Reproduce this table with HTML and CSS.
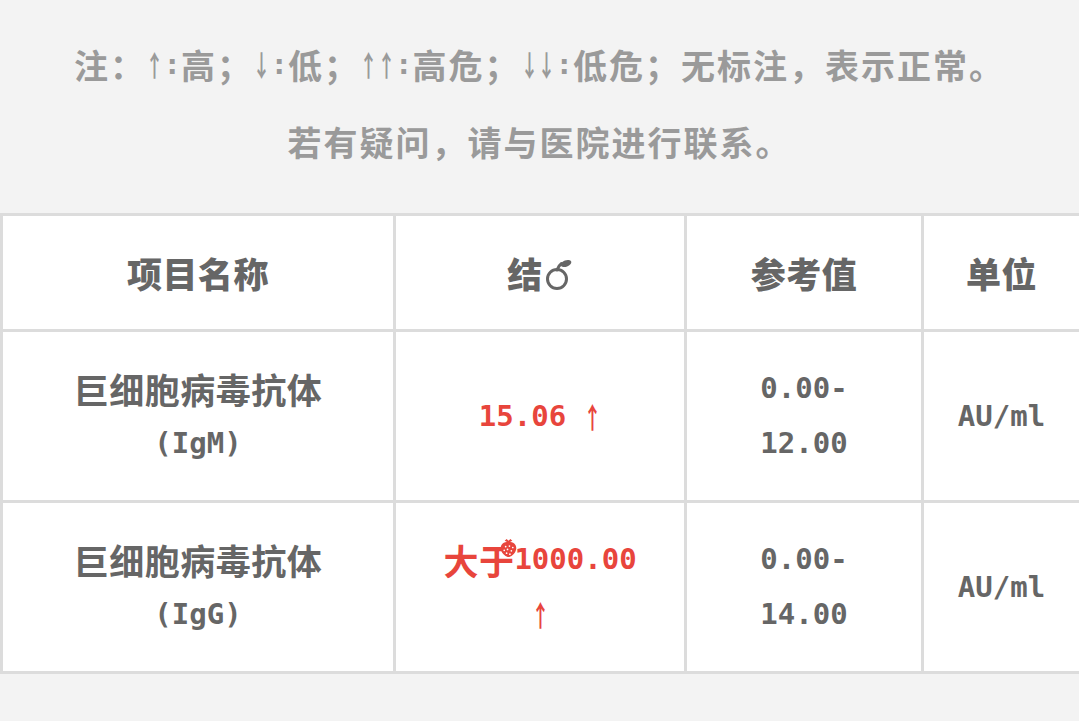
FILE: index.html
```html
<!DOCTYPE html>
<html lang="zh">
<head>
<meta charset="utf-8">
<link rel="stylesheet" href="styles.css">
</head>
<body>
<div class="note">
  <p>注：<span class="h"><span class="ar">↑</span>:</span>高；<span class="h"><span class="ar">↓</span>:</span>低；<span class="h"><span class="ar">↑</span><span class="ar">↑</span>:</span>高危；<span class="h"><span class="ar">↓</span><span class="ar">↓</span>:</span>低危；无标注，表示正常。</p>
  <p>若有疑问，请与医院进行联系。</p>
</div>
<table class="report">
  <colgroup>
    <col class="c1"><col class="c2"><col class="c3"><col class="c4">
  </colgroup>
  <thead>
    <tr>
      <th><div class="ln">项目名称</div></th>
      <th><div class="ln">结<svg class="apple" viewBox="0 0 28 32" width="28" height="32"><circle cx="12" cy="20" r="9.5" fill="none" stroke="#666" stroke-width="3"/><path d="M12 11 C13 8 14.5 6 16.5 4.5" fill="none" stroke="#666" stroke-width="3" stroke-linecap="round"/><ellipse cx="21" cy="4.5" rx="5.5" ry="3.2" transform="rotate(-20 21 4.5)" fill="#666"/></svg></div></th>
      <th><div class="ln">参考值</div></th>
      <th><div class="ln">单位</div></th>
    </tr>
  </thead>
  <tbody>
    <tr>
      <td><div class="ln">巨细胞病毒抗体</div><div class="ln m">(IgM)</div></td>
      <td class="red"><div class="ln m">15.06 <span class="ar">↑</span></div></td>
      <td><div class="ln m">0.00-</div><div class="ln m">12.00</div></td>
      <td><div class="ln m">AU/ml</div></td>
    </tr>
    <tr>
      <td><div class="ln">巨细胞病毒抗体</div><div class="ln m">(IgG)</div></td>
      <td class="red"><div class="ln"><span class="big">大于<svg class="berry" viewBox="0 0 20 22" width="19" height="21"><path d="M10 5 C16 5 19 9 18 13 C17 18 12 21 10 21 C8 21 3 18 2 13 C1 9 4 5 10 5 Z" fill="#e8453c"/><path d="M6 4 L10 6 L14 4 L12 2 L10 4 L8 2 Z" fill="#e8453c"/><g fill="#fff"><circle cx="7" cy="10" r="0.9"/><circle cx="11" cy="9.5" r="0.9"/><circle cx="14.5" cy="11" r="0.9"/><circle cx="5.5" cy="14" r="0.9"/><circle cx="9" cy="13" r="0.9"/><circle cx="13" cy="14.5" r="0.9"/><circle cx="8" cy="17" r="0.9"/><circle cx="11.5" cy="18" r="0.9"/></g></svg></span><span class="m">1000.00</span></div><div class="ln m"><span class="ar">↑</span></div></td>
      <td><div class="ln m">0.00-</div><div class="ln m">14.00</div></td>
      <td><div class="ln m">AU/ml</div></td>
    </tr>
  </tbody>
</table>
</body>
</html>
```
FILE: styles.css
```css
html, body {
  margin: 0;
  padding: 0;
  background: #f3f3f3;
}
body {
  width: 1079px;
  height: 721px;
  overflow: hidden;
  font-family: "Noto Sans CJK SC", "DejaVu Sans Mono", sans-serif;
}
.note {
  padding: 26px 0 33px;
  text-align: center;
  color: #9a9a9a;
  font-weight: 700;
  font-size: 34px;
  letter-spacing: 2px;
}
.note p {
  margin: 0;
  height: 77px;
  line-height: 77px;
}
.note .h {
  font-family: "DejaVu Sans Mono", monospace;
  font-size: 29px;
  letter-spacing: 0;
  vertical-align: top;
  line-height: 77px;
}
.note .ar {
  line-height: 77px;
}
.report {
  width: 1079px;
  border-collapse: collapse;
  table-layout: fixed;
  background: #fff;
}
.c1 { width: 393px; }
.c2 { width: 291px; }
.c3 { width: 237px; }
.c4 { width: 158px; }
.report th, .report td {
  border: 3px solid #dcdcdc;
  padding: 29px 0 29px;
  text-align: center;
  vertical-align: middle;
  color: #666;
  font-size: 35px;
  letter-spacing: 0.5px;
}
.ln {
  height: 55px;
  line-height: 55px;
  white-space: nowrap;
}
.report th {
  font-weight: 900;
}
.report td {
  font-weight: 700;
}
.m {
  font-family: "DejaVu Sans Mono", monospace;
  font-size: 29px;
  font-weight: 700;
  letter-spacing: 0;
  vertical-align: top;
  line-height: 55px;
}
.ar {
  display: inline-block;
  width: 29px;
  margin: 0 -5.75px;
  transform: scaleX(0.62);
  text-align: center;
  font-family: "Noto Sans CJK SC", sans-serif;
  font-size: 29px;
  font-weight: 700;
  letter-spacing: 0;
  vertical-align: top;
  line-height: 55px;
}
.red {
  color: #e8453c !important;
}
.big {
  position: relative;
  vertical-align: top;
  line-height: 55px;
}
.apple {
  vertical-align: -3px;
  margin-left: 2px;
}
.berry {
  position: absolute;
  right: -4px;
  top: 3px;
}
```
